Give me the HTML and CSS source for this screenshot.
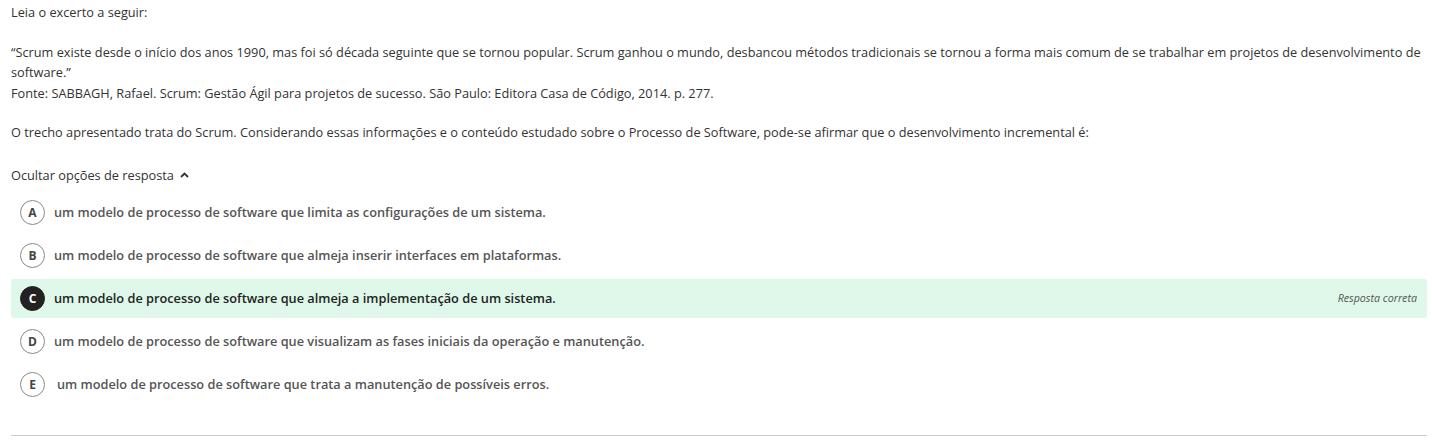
FILE: index.html
```html
<!DOCTYPE html>
<html lang="pt">
<head>
<meta charset="utf-8">
<link rel="stylesheet" href="styles.css">
</head>
<body>
<div class="question">
  <p class="para">Leia o excerto a seguir:</p>
  <p class="para">“Scrum existe desde o início dos anos 1990, mas foi só década seguinte que se tornou popular. Scrum ganhou o mundo, desbancou métodos tradicionais se tornou a forma mais comum de se trabalhar em projetos de desenvolvimento de software.”<br>Fonte: SABBAGH, Rafael. Scrum: Gestão Ágil para projetos de sucesso. São Paulo: Editora Casa de Código, 2014. p. 277.</p>
  <p class="para">O trecho apresentado trata do Scrum. Considerando essas informações e o conteúdo estudado sobre o Processo de Software, pode-se afirmar que o desenvolvimento incremental é:</p>
  <div class="toggle">Ocultar opções de resposta
    <svg class="chev" width="9" height="6" viewBox="0 0 9 6"><path d="M1 5 L4.5 1.5 L8 5" fill="none" stroke="#333" stroke-width="1.8"/></svg>
  </div>
  <ul class="options">
    <li class="option"><span class="badge">A</span><span class="otext">um modelo de processo de software que limita as configurações de um sistema.</span></li>
    <li class="option"><span class="badge">B</span><span class="otext">um modelo de processo de software que almeja inserir interfaces em plataformas.</span></li>
    <li class="option correct"><span class="badge">C</span><span class="otext">um modelo de processo de software que almeja a implementação de um sistema.</span><span class="tag">Resposta correta</span></li>
    <li class="option"><span class="badge">D</span><span class="otext">um modelo de processo de software que visualizam as fases iniciais da operação e manutenção.</span></li>
    <li class="option"><span class="badge">E</span><span class="otext shift">um modelo de processo de software que trata a manutenção de possíveis erros.</span></li>
  </ul>
  <hr class="rule">
</div>
</body>
</html>
```
FILE: styles.css
```css
* { box-sizing: border-box; }
html, body { margin: 0; background: #fff; }
body {
  font-family: "Open Sans", "Liberation Sans", sans-serif;
  font-size: 12.75px;
  color: #333;
}
.question {
  padding: 2px 5px 0 11px;
  width: 1432px;
}
.para {
  margin: 0 0 19px 0;
  line-height: 20.5px;
}
.toggle {
  margin-top: 22px;
  line-height: 20px;
  display: flex;
  align-items: center;
  gap: 6px;
}
.chev { margin-top: 1px; }
.options {
  list-style: none;
  margin: 8px 0 0 0;
  padding: 0;
  display: flex;
  flex-direction: column;
  gap: 4px;
}
.option {
  height: 39px;
  display: flex;
  align-items: center;
  padding: 0 10px 0 9px;
  border-radius: 2px;
}
.option.correct { background: #e0f8ea; }
.badge {
  width: 25px;
  height: 25px;
  border-radius: 50%;
  border: 1px solid #8a8a8a;
  display: flex;
  align-items: center;
  justify-content: center;
  font-weight: 700;
  font-size: 12px;
  color: #444;
  flex: none;
}
.correct .badge {
  background: #222;
  border-color: #222;
  color: #fff;
}
.otext {
  margin-left: 9px;
  font-weight: 600;
  color: #555;
}
.correct .otext { color: #222; }
.otext.shift { margin-left: 12px; }
.tag {
  margin-left: auto;
  font-style: italic;
  font-size: 10.7px;
  color: #555;
}
.rule {
  margin: 31px 0 0 0;
  border: 0;
  border-top: 1px solid #ccc;
}
```
